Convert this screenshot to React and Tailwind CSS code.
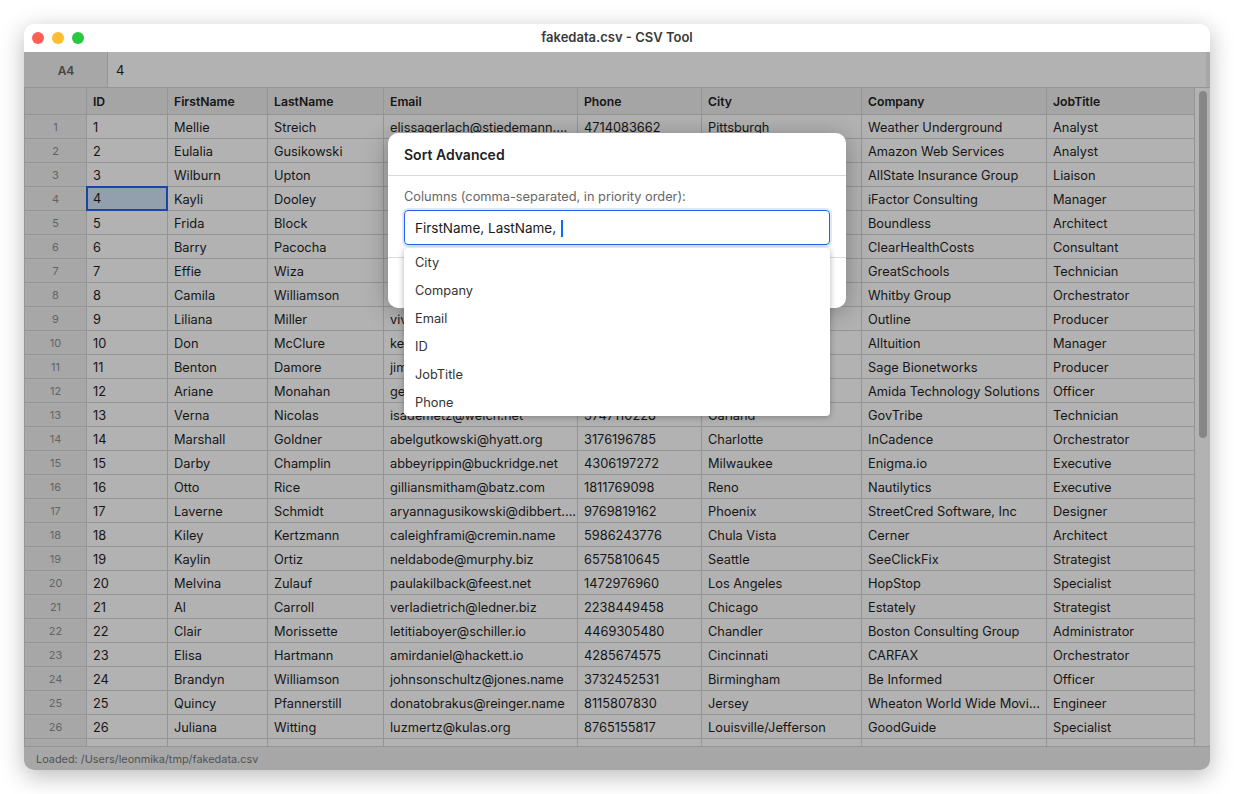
const columns = [
  { name: "ID", width: "w-[81px]" },
  { name: "FirstName", width: "w-[100px]" },
  { name: "LastName", width: "w-[116px]" },
  { name: "Email", width: "w-[194px]" },
  { name: "Phone", width: "w-[124px]" },
  { name: "City", width: "w-[160px]" },
  { name: "Company", width: "w-[185px]" },
  { name: "JobTitle", width: "w-[148px]" },
];

const rows = [
  ["1", "Mellie", "Streich", "elissagerlach@stiedemann....", "4714083662", "Pittsburgh", "Weather Underground", "Analyst"],
  ["2", "Eulalia", "Gusikowski", "", "", "", "Amazon Web Services", "Analyst"],
  ["3", "Wilburn", "Upton", "", "", "", "AllState Insurance Group", "Liaison"],
  ["4", "Kayli", "Dooley", "", "", "", "iFactor Consulting", "Manager"],
  ["5", "Frida", "Block", "", "", "", "Boundless", "Architect"],
  ["6", "Barry", "Pacocha", "", "", "", "ClearHealthCosts", "Consultant"],
  ["7", "Effie", "Wiza", "", "", "", "GreatSchools", "Technician"],
  ["8", "Camila", "Williamson", "", "", "", "Whitby Group", "Orchestrator"],
  ["9", "Liliana", "Miller", "vivian", "", "", "Outline", "Producer"],
  ["10", "Don", "McClure", "kenny", "", "", "Alltuition", "Manager"],
  ["11", "Benton", "Damore", "jimmy", "", "", "Sage Bionetworks", "Producer"],
  ["12", "Ariane", "Monahan", "george", "", "", "Amida Technology Solutions", "Officer"],
  ["13", "Verna", "Nicolas", "isademetz@welch.net", "3747110228", "Garland", "GovTribe", "Technician"],
  ["14", "Marshall", "Goldner", "abelgutkowski@hyatt.org", "3176196785", "Charlotte", "InCadence", "Orchestrator"],
  ["15", "Darby", "Champlin", "abbeyrippin@buckridge.net", "4306197272", "Milwaukee", "Enigma.io", "Executive"],
  ["16", "Otto", "Rice", "gilliansmitham@batz.com", "1811769098", "Reno", "Nautilytics", "Executive"],
  ["17", "Laverne", "Schmidt", "aryannagusikowski@dibbert....", "9769819162", "Phoenix", "StreetCred Software, Inc", "Designer"],
  ["18", "Kiley", "Kertzmann", "caleighframi@cremin.name", "5986243776", "Chula Vista", "Cerner", "Architect"],
  ["19", "Kaylin", "Ortiz", "neldabode@murphy.biz", "6575810645", "Seattle", "SeeClickFix", "Strategist"],
  ["20", "Melvina", "Zulauf", "paulakilback@feest.net", "1472976960", "Los Angeles", "HopStop", "Specialist"],
  ["21", "Al", "Carroll", "verladietrich@ledner.biz", "2238449458", "Chicago", "Estately", "Strategist"],
  ["22", "Clair", "Morissette", "letitiaboyer@schiller.io", "4469305480", "Chandler", "Boston Consulting Group", "Administrator"],
  ["23", "Elisa", "Hartmann", "amirdaniel@hackett.io", "4285674575", "Cincinnati", "CARFAX", "Orchestrator"],
  ["24", "Brandyn", "Williamson", "johnsonschultz@jones.name", "3732452531", "Birmingham", "Be Informed", "Officer"],
  ["25", "Quincy", "Pfannerstill", "donatobrakus@reinger.name", "8115807830", "Jersey", "Wheaton World Wide Movi...", "Engineer"],
  ["26", "Juliana", "Witting", "luzmertz@kulas.org", "8765155817", "Louisville/Jefferson", "GoodGuide", "Specialist"],
  ["", "", "", "", "", "", "", ""],
];

const suggestions = ["City", "Company", "Email", "ID", "JobTitle", "Phone"];

function HeaderRow() {
  return (
    <div className="flex h-[27px] shrink-0 border-b border-[#d6d6d6] bg-[#ececec] text-[12.2px] font-semibold text-[#222]">
      <div className="w-[62px] shrink-0 border-r border-[#d6d6d6]" />
      {columns.map(col => (
        <div
          key={col.name}
          className={`${col.width} shrink-0 border-r border-[#d6d6d6] pl-[6px] leading-[28px]`}
        >
          {col.name}
        </div>
      ))}
    </div>
  );
}

function DataRow({ row, index }) {
  return (
    <div className="flex h-[24px] shrink-0 border-b border-[#d6d6d6]">
      <div className="w-[62px] shrink-0 border-r border-[#d6d6d6] bg-[#f0f0f0] text-center text-[11px] leading-[25px] text-[#8f8f8f]">
        {row[0]}
      </div>
      {row.map((value, i) => {
        // selected cell in the ID column, row 4
        const selected = index === 3 && i === 0;
        return (
          <div
            key={i}
            className={
              selected
                ? "-my-[1px] -ml-[1px] h-[25px] w-[82px] shrink-0 overflow-hidden border-2 border-[#2563eb] bg-[#d2e6fa] pl-[5px] leading-[21px]"
                : `${columns[i].width} shrink-0 overflow-hidden whitespace-nowrap border-r border-[#d6d6d6] pl-[6px] leading-[25px]`
            }
          >
            {value}
          </div>
        );
      })}
    </div>
  );
}

function SortDialog() {
  return (
    <div className="absolute left-[364px] top-[81px] flex h-[175px] w-[458px] flex-col rounded-[10px] bg-white shadow-[0_4px_24px_rgba(0,0,0,0.3)]">
      <div className="h-[43px] shrink-0 border-b border-[#d9d9d9] pl-[16px] text-[14px] font-semibold leading-[43px] text-[#222]">
        Sort Advanced
      </div>
      <div className="px-[16px] pt-[13px]">
        <div className="text-[12.8px] leading-[16px] text-[#666]">
          Columns (comma-separated, in priority order):
        </div>
        <div className="relative mt-[5px]">
          <div className="flex h-[35px] items-center rounded-[4px] border border-[#2563eb] pl-[10px] text-[13.5px] text-[#1a1a1a] shadow-[0_0_0_2px_rgba(37,99,235,0.15)]">
            <span className="whitespace-pre pt-[2px]">FirstName, LastName, </span>
            <span className="ml-[1px] mt-[1px] h-[17px] w-[2px] bg-[#0a6cff]" />
          </div>
          <div className="absolute left-0 right-0 top-full z-10 mt-[3px] h-[168px] overflow-hidden rounded-[4px] bg-white shadow-[0_1px_6px_rgba(0,0,0,0.3)]">
            {suggestions.map(item => (
              <div key={item} className="h-[28px] pl-[11px] leading-[30px] text-[#333]">
                {item}
              </div>
            ))}
          </div>
        </div>
      </div>
      <div className="mt-[12px] border-t border-[#d9d9d9]" />
    </div>
  );
}

export default function App() {
  return (
    <div className="h-[794px] bg-white p-[24px] font-['Inter',sans-serif] text-[12.8px] text-[#1f1f1f]">
      <div className="flex h-[746px] w-[1186px] flex-col overflow-hidden rounded-[10px] bg-white shadow-[0_6px_24px_rgba(0,0,0,0.28)]">
        {/* Title bar */}
        <div className="relative flex h-[28px] shrink-0 items-center justify-center text-[13px] font-semibold text-[#3a3a3a]">
          <div className="absolute left-[8px] top-[8px] flex gap-[8px]">
            <span className="h-[12px] w-[12px] rounded-full bg-[#ff5f57]" />
            <span className="h-[12px] w-[12px] rounded-full bg-[#febc2e]" />
            <span className="h-[12px] w-[12px] rounded-full bg-[#28c840]" />
          </div>
          fakedata.csv - CSV Tool
        </div>

        {/* Everything below the title bar sits under the modal backdrop */}
        <div className="relative flex min-h-0 flex-1 flex-col">
          <div className="flex h-[36px] shrink-0 border-b border-[#d6d6d6] bg-white">
            <div className="w-[84px] shrink-0 border-r border-[#d6d6d6] bg-[#f0f0f0] pl-[1px] text-center text-[12px] font-semibold leading-[37px] text-[#666]">
              A4
            </div>
            <div className="flex-1 pl-[8px] text-[13px] leading-[37px]">4</div>
            <div className="w-[4px] shrink-0 bg-[#f0f0f0]" />
          </div>

          <div className="flex min-h-0 flex-1">
            <div className="min-w-0 flex-1 overflow-hidden border-l border-[#d6d6d6]">
              <HeaderRow />
              {rows.map((row, i) => (
                <DataRow key={i} row={row} index={i} />
              ))}
            </div>
            <div className="w-[16px] shrink-0 border-l border-[#d6d6d6] pl-[4px] pt-[3px]">
              <div className="h-[347px] w-[8px] rounded-full bg-[#c0c0c0]" />
            </div>
          </div>

          <div className="h-[24px] shrink-0 border-t border-[#d6d6d6] bg-[#f0f0f0] pl-[12px] text-[10.9px] leading-[24px] text-[#777]">
            Loaded: /Users/leonmika/tmp/fakedata.csv
          </div>

          <div className="absolute inset-0 bg-black/30" />
          <SortDialog />
        </div>
      </div>
    </div>
  );
}
